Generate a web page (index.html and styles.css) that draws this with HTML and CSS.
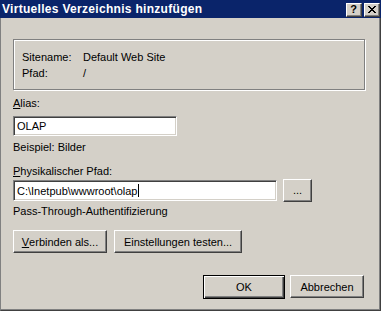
FILE: index.html
```html
<!DOCTYPE html>
<html>
<head>
<meta charset="utf-8">
<link rel="stylesheet" href="styles.css">
</head>
<body>
<div class="window">
  <div class="titlebar">
    <span class="title">Virtuelles Verzeichnis hinzufügen</span>
    <div class="tb-btns">
      <span class="tb-btn help">?</span>
      <span class="tb-btn close"><svg width="8" height="7" viewBox="0 0 8 7"><path d="M0 0h2v1h1v1h2v-1h1v-1h2v1h-1v1h-1v1h-1v1h1v1h1v1h1v1h-2v-1h-1v-1h-2v1h-1v1h-2v-1h1v-1h1v-1h1v-1h-1v-1h-1v-1h-1z" fill="#000"/></svg></span>
    </div>
  </div>
  <div class="client">
    <div class="group">
      <div class="info-row"><span class="info-key">Sitename:</span><span>Default Web Site</span></div>
      <div class="info-row"><span class="info-key">Pfad:</span><span>/</span></div>
    </div>
    <div class="label alias-label"><u>A</u>lias:</div>
    <div class="input alias-input">OLAP</div>
    <div class="text hint">Beispiel: Bilder</div>
    <div class="label path-label"><u>P</u>hysikalischer Pfad:</div>
    <div class="path-row">
      <div class="input path-input">C:\Inetpub\wwwroot\olap<span class="caret"></span></div>
      <div class="btn browse">...</div>
    </div>
    <div class="text auth">Pass-Through-Authentifizierung</div>
    <div class="btn-row">
      <div class="btn connect"><u>V</u>erbinden als...</div>
      <div class="btn test">Einstellungen testen...</div>
    </div>
    <div class="footer">
      <div class="btn ok">OK</div>
      <div class="btn cancel">Abbrechen</div>
    </div>
  </div>
</div>
</body>
</html>
```

FILE: styles.css
```css
html, body {
  margin: 0;
  padding: 0;
  background: #d4d0c8;
}
body {
  font-family: "Liberation Sans", Arial, sans-serif;
  font-size: 11px;
  color: #000;
}
.window {
  width: 381px;
  height: 311px;
  box-sizing: border-box;
  background: #d4d0c8;
  border-left: 1px solid #808080;
  border-right: 1px solid #404040;
  border-bottom: 1px solid #404040;
  box-shadow: inset -1px -1px 0 #808080;
  display: flex;
  flex-direction: column;
}
.titlebar {
  height: 18px;
  background: #0a246a;
  display: flex;
  align-items: center;
  justify-content: space-between;
  padding-left: 2px;
  padding-right: 1px;
  margin-left: -1px;
  margin-right: -1px;
}
.title {
  color: #fff;
  font-weight: bold;
  font-size: 12px;
  line-height: 18px;
  letter-spacing: 0.3px;
}
.tb-btns {
  display: flex;
  gap: 2px;
  align-items: center;
  padding-top: 1px;
}
.tb-btn {
  width: 16px;
  height: 14px;
  box-sizing: border-box;
  background: #d4d0c8;
  border: 1px solid;
  border-color: #fff #404040 #404040 #fff;
  box-shadow: inset -1px -1px 0 #808080;
  display: flex;
  align-items: center;
  justify-content: center;
}
.help {
  font-weight: bold;
  font-size: 11px;
  line-height: 11px;
  padding-right: 1px;
}
.close svg {
  display: block;
  margin-top: -1px;
  margin-left: -1px;
}
.client {
  padding: 20px 12px 0 12px;
  margin-top: 1px;
  display: flex;
  flex-direction: column;
}
.group {
  border: 1px solid #808080;
  box-shadow: 1px 1px 0 #fff, inset 1px 1px 0 #fff;
  padding: 9px 0 8px 8px;
  width: 352px;
  box-sizing: border-box;
}
.info-row {
  display: flex;
  line-height: 16px;
  height: 16px;
}
.info-key {
  width: 61px;
}
.label, .text {
  line-height: 13px;
  height: 13px;
}
.alias-label {
  margin-top: 7px;
}
.input {
  background: #fff;
  box-sizing: border-box;
  height: 20px;
  border: 1px solid;
  border-color: #808080 #fff #fff #808080;
  box-shadow: inset 1px 1px 0 #404040, inset -1px -1px 0 #d4d0c8;
  padding: 0 3px;
  line-height: 18px;
  white-space: nowrap;
  display: flex;
  align-items: center;
}
.alias-input {
  margin-top: 6px;
  width: 164px;
}
.hint {
  margin-top: 5px;
}
.path-label {
  margin-top: 11px;
}
.path-row {
  margin-top: 1px;
  display: flex;
  align-items: center;
  gap: 6px;
}
.path-input {
  width: 264px;
  height: 21px;
}
.caret {
  display: inline-block;
  width: 1px;
  height: 13px;
  background: #000;
  margin-left: 1px;
}
.btn {
  box-sizing: border-box;
  height: 23px;
  background: #d4d0c8;
  border: 1px solid;
  border-color: #fff #404040 #404040 #fff;
  box-shadow: inset -1px -1px 0 #808080;
  display: flex;
  align-items: center;
  justify-content: center;
  white-space: nowrap;
}
.browse {
  width: 29px;
  padding-bottom: 2px;
}
.auth {
  margin-top: 3px;
}
.btn-row {
  margin-top: 12px;
  display: flex;
  gap: 7px;
}
.connect {
  width: 94px;
}
.test {
  width: 128px;
}
.footer {
  margin-top: 22px;
  display: flex;
  justify-content: flex-end;
  gap: 5px;
  padding-right: 4px;
}
.ok {
  width: 82px;
  height: 24px;
  border: 1px solid #000;
  box-shadow: inset 1px 1px 0 #fff, inset -1px -1px 0 #404040, inset -2px -2px 0 #808080;
}
.cancel {
  width: 74px;
}
```
